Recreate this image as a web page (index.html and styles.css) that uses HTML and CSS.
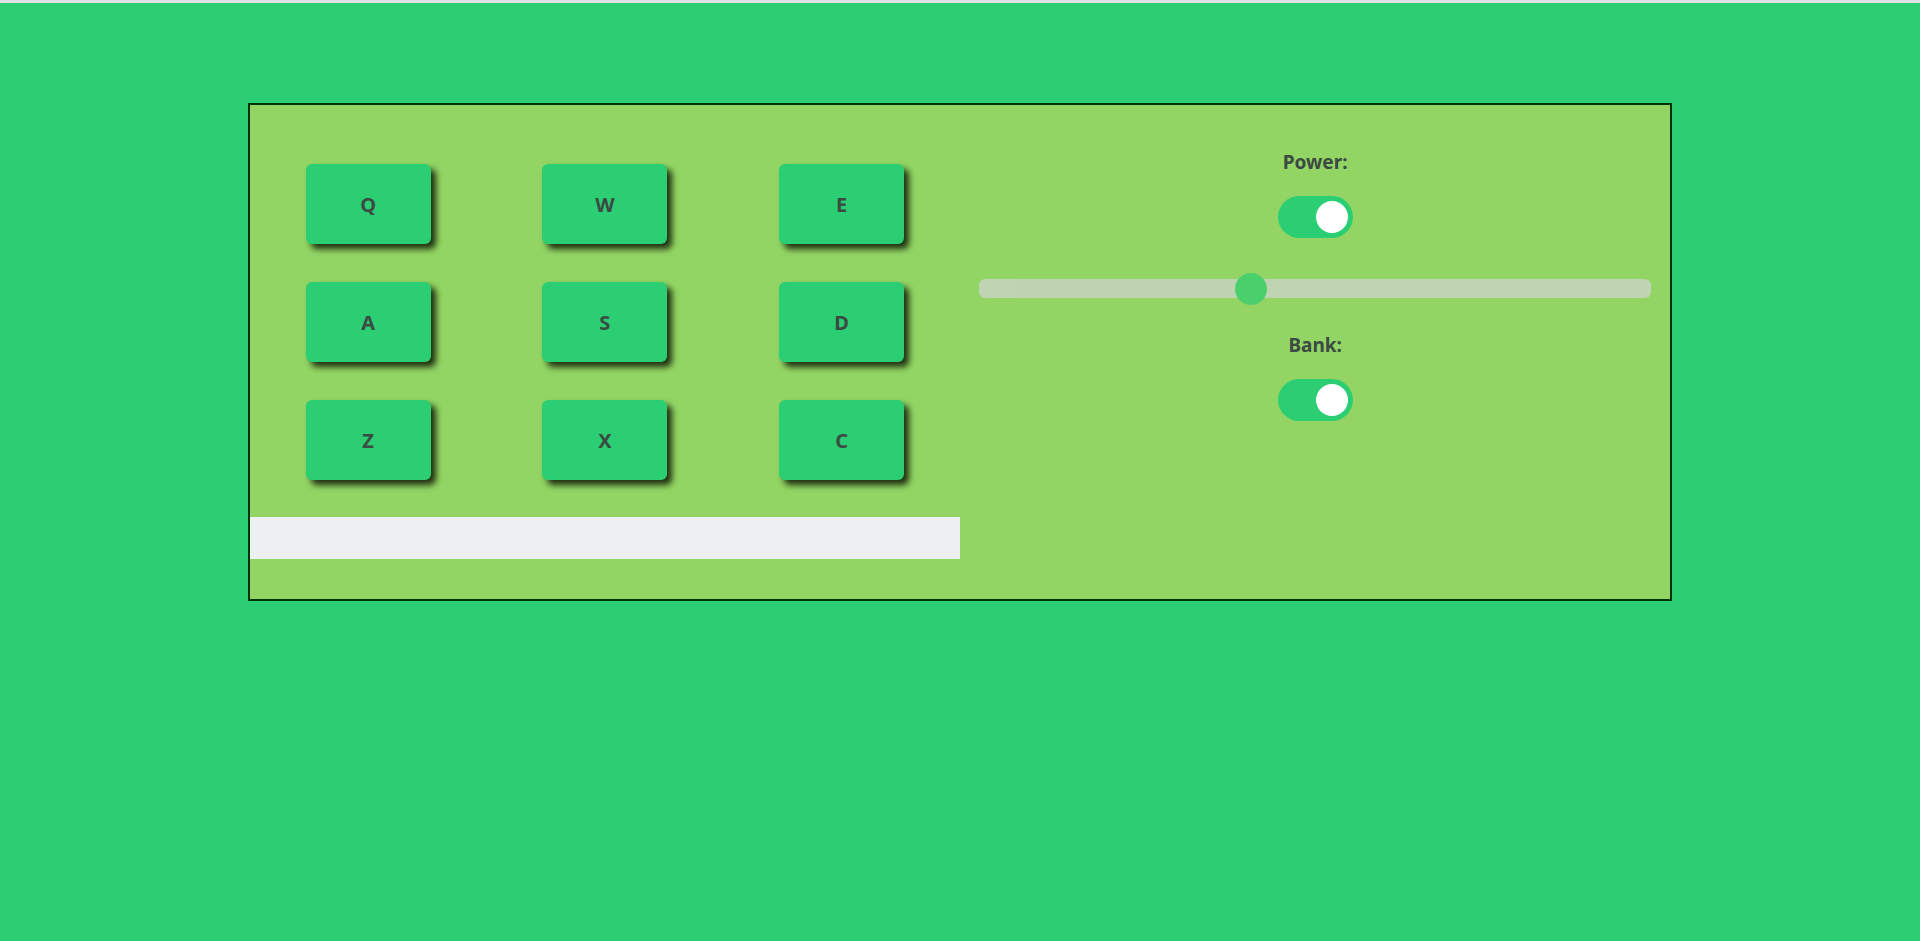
FILE: index.html
```html
<!DOCTYPE html>
<html lang="en">
<head>
<meta charset="utf-8">
<title>Drum Machine</title>
<link rel="stylesheet" href="styles.css">
</head>
<body>
<main class="machine">
  <section class="pads">
    <div class="pad-grid">
      <button class="pad">Q</button>
      <button class="pad">W</button>
      <button class="pad">E</button>
      <button class="pad">A</button>
      <button class="pad">S</button>
      <button class="pad">D</button>
      <button class="pad">Z</button>
      <button class="pad">X</button>
      <button class="pad">C</button>
    </div>
    <div class="display"></div>
  </section>
  <section class="controls">
    <label class="label" for="power">Power:</label>
    <input class="switch" type="checkbox" id="power" checked>
    <input class="slider" type="range" min="0" max="100" value="40" aria-label="Volume">
    <label class="label" for="bank">Bank:</label>
    <input class="switch" type="checkbox" id="bank" checked>
  </section>
</main>
</body>
</html>
```
FILE: styles.css
```css
* { box-sizing: border-box; }

body {
  margin: 0;
  min-height: 100vh;
  padding-top: 100px;
  border-top: 2px solid #dee1e6;
  border-top-width: 3px;
  background: #2bce72;
  color: #3b4a42;
  font-family: "Noto Sans", "Open Sans", sans-serif;
  font-size: 19px;
  font-weight: 700;
}

.machine {
  display: grid;
  grid-template-columns: 1fr 1fr;
  width: 74.2%;
  margin: 0 auto;
  padding-bottom: 40px;
  border: 2px solid #003300;
  background: #92d564;
}

.pad-grid {
  display: grid;
  grid-template-columns: repeat(3, 1fr);
  justify-items: center;
  row-gap: 38px;
  padding: 59px 0 37px;
}

.pad {
  width: 125px;
  height: 80px;
  border: 0;
  border-radius: 6px;
  background: #2bce72;
  box-shadow: 5px 5px 6px #1e3010;
  color: inherit;
  font: inherit;
  font-size: 20px;
}

.display {
  height: 42px;
  background: #ecf0f1;
}

.controls {
  display: flex;
  flex-direction: column;
  align-items: center;
  padding: 43px 19px 0;
}

.label { line-height: 28px; }

.switch {
  appearance: none;
  display: flex;
  width: 75px;
  height: 42px;
  margin: 20px 0 0;
  padding: 5px;
  border-radius: 21px;
  background: #ccc;
}

.switch::before {
  content: "";
  width: 32px;
  height: 32px;
  border-radius: 50%;
  background: #fff;
}

.switch:checked {
  justify-content: flex-end;
  background: #2bce72;
}

.slider {
  appearance: none;
  width: 100%;
  height: 19px;
  margin: 41px 0 33px;
  border-radius: 6px;
  background: #d3d3d3;
  opacity: 0.7;
}

.slider::-webkit-slider-thumb {
  appearance: none;
  width: 32px;
  height: 32px;
  border-radius: 50%;
  background: #2bce72;
}
```
